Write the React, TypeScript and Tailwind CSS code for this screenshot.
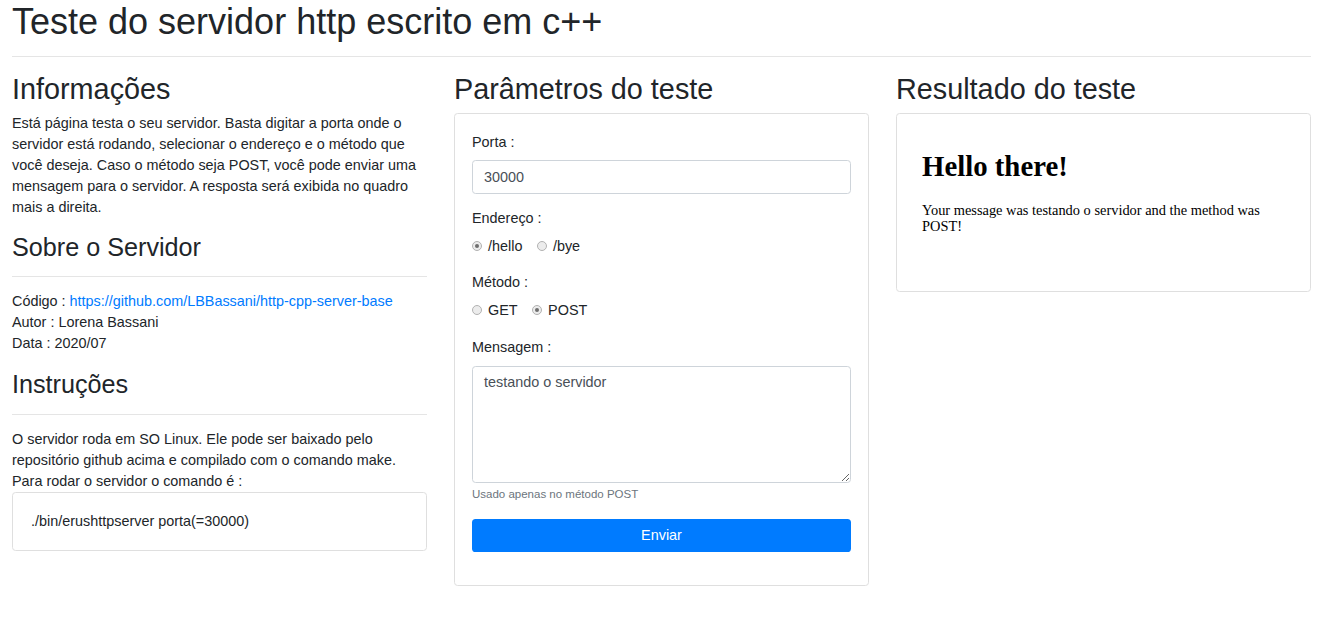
import React from 'react';

const sans = { fontFamily: '"Liberation Sans", Arial, sans-serif' };

function Radio({ checked, label }: { checked?: boolean; label: string }) {
  return (
    <label className="mr-[14.5px] inline-flex h-[21px] items-center">
      <span className="mr-[6px] flex h-[10px] w-[10px] items-center justify-center rounded-full border border-[#b2b2b2] bg-[#ececec]">
        {checked && <span className="h-[4px] w-[4px] rounded-full bg-[#6e6e6e]" />}
      </span>
      <span>{label}</span>
    </label>
  );
}

function Label({ children }: { children: React.ReactNode }) {
  return <div className="mb-[7px] h-[21px] leading-[21px]">{children}</div>;
}

export default function App() {
  return (
    <div
      className="min-h-screen bg-white pl-[12px] pr-[8px] text-[14.4px] leading-[21px] text-[#212529]"
      style={sans}
    >
      <h1 className="h-[43px] text-[36px] font-normal leading-[43px]">
        Teste do servidor http escrito em c++
      </h1>
      <hr className="mt-[13px] mb-[15px] border-0 border-t border-[#e5e5e5]" />

      <div className="grid grid-cols-3 items-start gap-x-[27px]">
        {/* Informações */}
        <div>
          <h2 className="mb-[6px] text-[28.8px] leading-[34.5px]">Informações</h2>
          <p className="mb-[14.4px]">
            Está página testa o seu servidor. Basta digitar a porta onde o servidor está rodando,
            selecionar o endereço e o método que você deseja. Caso o método seja POST, você pode
            enviar uma mensagem para o servidor. A resposta será exibida no quadro mais a direita.
          </p>
          <h3 className="text-[25.2px] leading-[30px]">Sobre o Servidor</h3>
          <hr className="my-[14px] border-0 border-t border-[#e5e5e5]" />
          <div className="mb-[15px]">
            <div>
              Código :{' '}
              <a href="#" className="text-[#007bff]">
                https://github.com/LBBassani/http-cpp-server-base
              </a>
            </div>
            <div>Autor : Lorena Bassani</div>
            <div>Data : 2020/07</div>
          </div>
          <h3 className="text-[25.2px] leading-[30px]">Instruções</h3>
          <hr className="mt-[15px] mb-[14px] border-0 border-t border-[#e5e5e5]" />
          <p>
            O servidor roda em SO Linux. Ele pode ser baixado pelo repositório github acima e
            compilado com o comando make. Para rodar o servidor o comando é :
          </p>
          <div className="rounded-[3.6px] border border-[#dfdfdf] p-[18px]">
            ./bin/erushttpserver porta(=30000)
          </div>
        </div>

        {/* Parâmetros */}
        <div>
          <h2 className="mb-[6px] text-[28.8px] leading-[34.5px]">Parâmetros do teste</h2>
          <div className="rounded-[3.6px] border border-[#dfdfdf] px-[17px] pt-[18px] pb-[33px]">
            <Label>Porta :</Label>
            <input
              defaultValue="30000"
              className="block h-[34px] w-full rounded-[3.6px] border border-[#ced4da] px-[11px] text-[14.4px] text-[#495057] outline-none"
              style={sans}
            />
            <div className="mt-[14px]">
              <Label>Endereço :</Label>
              <div className="flex">
                <Radio checked label="/hello" />
                <Radio label="/bye" />
              </div>
            </div>
            <div className="mt-[15px]">
              <Label>Método :</Label>
              <div className="flex">
                <Radio label="GET" />
                <Radio checked label="POST" />
              </div>
            </div>
            <div className="mt-[16px]">
              <div className="mb-[8px] h-[21px] leading-[21px]">Mensagem :</div>
              <textarea
                defaultValue="testando o servidor"
                className="block h-[117px] w-full rounded-[3.6px] border border-[#ced4da] px-[11px] py-[5px] text-[14.4px] leading-[21.6px] text-[#495057] outline-none"
                style={sans}
              />
              <div className="mt-[3px] h-[17px] text-[11.5px] leading-[17px] text-[#6c757d]">
                Usado apenas no método POST
              </div>
            </div>
            <button
              className="mt-[16px] block h-[33px] w-full rounded-[3.6px] bg-[#007bff] text-[14.4px] text-white"
              style={sans}
            >
              Enviar
            </button>
          </div>
        </div>

        {/* Resultado */}
        <div>
          <h2 className="mb-[6px] text-[28.8px] leading-[34.5px]">Resultado do teste</h2>
          <div className="rounded-[3.6px] border border-[#dfdfdf] p-[18px]">
            <div
              className="h-[141px] px-[7px] pt-[18px] text-black"
              style={{ fontFamily: '"Liberation Serif", "Times New Roman", serif' }}
            >
              <h1 className="mb-[19px] text-[28.8px] font-bold leading-[33px]">Hello there!</h1>
              <p className="text-[14.4px] leading-[16.5px]">
                Your message was testando o servidor and the method was POST!
              </p>
            </div>
          </div>
        </div>
      </div>
    </div>
  );
}
